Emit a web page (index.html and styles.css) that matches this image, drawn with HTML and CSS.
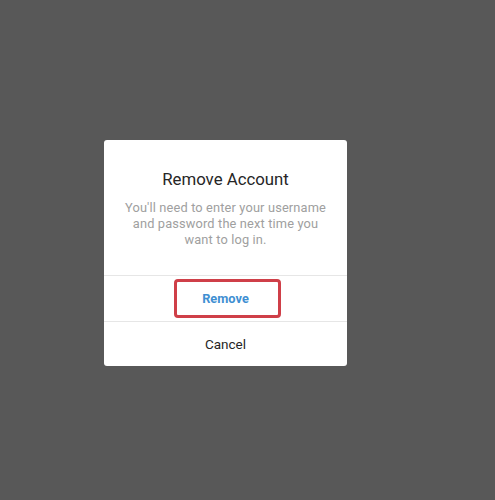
FILE: index.html
```html
<!DOCTYPE html>
<html>
<head>
<meta charset="utf-8">
<link rel="stylesheet" href="styles.css">
</head>
<body>
<div class="screen">
  <div class="dialog">
    <div class="head">
      <div class="title">Remove Account</div>
      <div class="msg">You'll need to enter your username and password the next time you want to log in.</div>
    </div>
    <div class="row">
      <span class="remove">Remove</span>
      <span class="highlight"></span>
    </div>
    <div class="row">
      <span class="cancel">Cancel</span>
    </div>
  </div>
</div>
</body>
</html>
```
FILE: styles.css
```css
html, body { margin: 0; padding: 0; }
body { background: #585858; font-family: Roboto, "Noto Sans", sans-serif; }
.screen {
  width: 495px; height: 500px;
  display: flex; align-items: flex-start; justify-content: flex-start;
}
.dialog {
  margin: 140px 0 0 104px;
  width: 243px;
  background: #fff;
  border-radius: 3px;
}
.head {
  height: 136px;
  box-sizing: border-box;
  padding: 28px 18px 0;
  text-align: center;
  border-bottom: 1px solid #e6e6e6;
}
.title { font-size: 16.8px; color: #262626; line-height: 22px; }
.msg { margin-top: 10px; font-size: 12.8px; line-height: 16px; color: #a0a0a0; letter-spacing: 0.15px; }
.row {
  position: relative;
  height: 45px;
  display: flex; align-items: center; justify-content: center;
  font-size: 13.5px;
}
.row + .row { border-top: 1px solid #e6e6e6; height: 44px; }
.remove { color: #3f8fd2; font-weight: 700; font-size: 12.8px; }
.cancel { color: #262626; }
.highlight {
  position: absolute;
  left: 70px; top: 3px;
  width: 107px; height: 39px;
  box-sizing: border-box;
  border: 3px solid #cf3f48;
  border-radius: 4px;
}
```
